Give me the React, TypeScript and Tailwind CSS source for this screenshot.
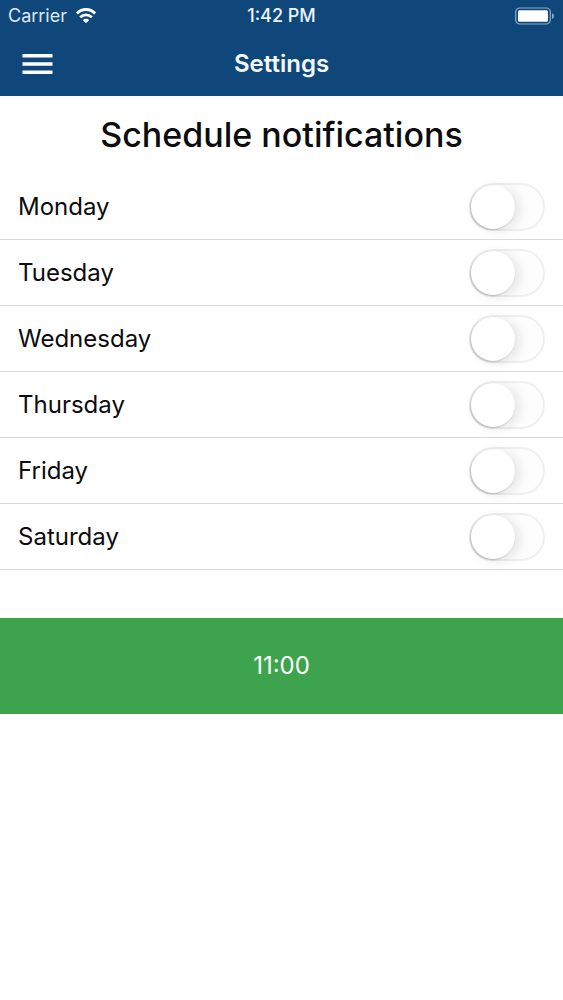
import { useState } from "react";

const DAYS = ["Monday", "Tuesday", "Wednesday", "Thursday", "Friday", "Saturday"];

function WifiIcon() {
  return (
    <svg className="h-4 w-[22px]" viewBox="0 0 20 16" fill="none" stroke="currentColor" strokeWidth="2.8" aria-hidden="true">
      <path d="M0.9 5.4C6 0.2 14 0.2 19.1 5.4" />
      <path d="M4.2 9.2C7.4 6 12.6 6 15.8 9.2" />
      <path d="M10 15.2 6.9 12.2C8.6 10.3 11.4 10.3 13.1 12.2Z" fill="currentColor" stroke="none" />
    </svg>
  );
}

function BatteryIcon() {
  return (
    <svg className="h-[18px] w-10" viewBox="0 0 40 18" aria-hidden="true">
      <rect x="0.7" y="1" width="34.6" height="16" rx="4" fill="none" stroke="#8fabc8" strokeWidth="1.2" />
      <rect x="3" y="3.2" width="30" height="11.6" rx="1.5" fill="#fff" />
      <path d="M37 6.2C39.6 7 39.6 11 37 11.8Z" fill="#8fabc8" />
    </svg>
  );
}

function StatusBar() {
  return (
    <div className="grid h-[31px] grid-cols-3 items-center px-2 text-lg leading-5">
      <div className="flex items-center gap-2 text-[#dce9f5]">
        <span>Carrier</span>
        <span className="text-white">
          <WifiIcon />
        </span>
      </div>
      <div className="text-center font-medium text-[#eaf3fb]">1:42 PM</div>
      <div className="flex justify-end">
        <BatteryIcon />
      </div>
    </div>
  );
}

function NavBar() {
  return (
    <div className="grid h-[65px] grid-cols-[64px_1fr_64px] items-center">
      <button type="button" aria-label="Open menu" className="flex h-full items-center pl-[22px]">
        <svg className="h-5 w-[31px]" viewBox="0 0 31 20" fill="currentColor" aria-hidden="true">
          <path d="M0.5 0H30.5V3.4H0.5ZM0.5 8.3H30.5V11.7H0.5ZM0.5 16.6H30.5V20H0.5Z" />
        </svg>
      </button>
      <h1 className="text-center text-2xl font-semibold text-[#f3f8fd]">Settings</h1>
    </div>
  );
}

function DayRow({ day, enabled, onToggle }: { day: string; enabled: boolean; onToggle: () => void }) {
  return (
    <li>
      <label className="flex h-[66px] items-center justify-between border-b border-[#dad9dc] px-[18px] text-2xl">
        {day}
        <input
          type="checkbox"
          role="switch"
          checked={enabled}
          onChange={onToggle}
          className="h-12 w-[76px] cursor-pointer appearance-none rounded-full border-2 border-[#f0eef1] bg-[#fefdfe] before:block before:size-11 before:rounded-full before:bg-white before:shadow-[-1px_1px_2px_rgba(0,0,0,0.22),5px_2px_12px_rgba(0,0,0,0.1)] before:transition-transform checked:border-[#3da44d] checked:bg-[#3da44d] checked:before:translate-x-7"
        />
      </label>
    </li>
  );
}

export default function App() {
  const [enabledDays, setEnabledDays] = useState<string[]>([]);

  const toggleDay = (day: string) => {
    setEnabledDays((days) => (days.includes(day) ? days.filter((item) => item !== day) : [...days, day]));
  };

  return (
    <div className="min-h-screen bg-white font-['Inter',sans-serif] text-[#0c0c0e]">
      <header className="bg-[#10477b] text-white">
        <StatusBar />
        <NavBar />
      </header>

      <main>
        <h2 className="py-[19px] text-center text-[34px] font-medium leading-10">Schedule notifications</h2>
        <ul>
          {DAYS.map((day) => (
            <DayRow key={day} day={day} enabled={enabledDays.includes(day)} onToggle={() => toggleDay(day)} />
          ))}
        </ul>
        <button type="button" className="mt-12 h-24 w-full bg-[#3da44d] text-2xl text-white">
          11:00
        </button>
      </main>
    </div>
  );
}
